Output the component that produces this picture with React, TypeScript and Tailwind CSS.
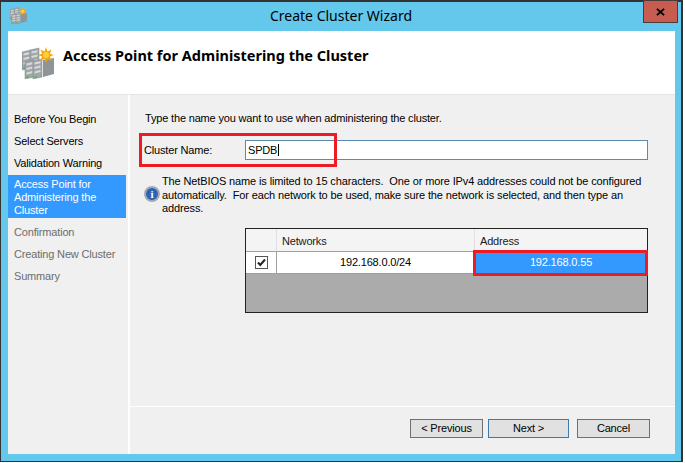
const font = "font-['Liberation_Sans',Arial,sans-serif]";

// server rack pile with the yellow burst, used in title bar and header
function ClusterIcon({ className }: { className: string }) {
  const rack = (x: number, y: number, h: number, key: number) => (
    <g key={key}>
      <path d={`M${x} ${y + 1}l9-2v${h}l-9 2z`} fill="#a2a6a9" stroke="#7f8386" strokeWidth="0.5" />
      <path d={`M${x + 1.5} ${y + 2.6}l6-1.4v2l-6 1.4zM${x + 1.5} ${y + 7}l6-1.4v2l-6 1.4zM${x + 1.5} ${y + 11.4}l6-1.4v2l-6 1.4z`} fill="#d8dbdc" />
      <rect x={x + 1.5} y={y + h - 2} width="2" height="2" fill="#45c43c" />
    </g>
  );
  return (
    <svg viewBox="0 0 32 32" className={className}>
      {rack(0, 4, 18, 1)}
      {rack(8, 2, 19, 2)}
      <path d="M21 13l11-2v16l-11 3z" fill="#8f9497" />
      {rack(3, 14, 17, 3)}
      {rack(11, 13, 18, 4)}
      <path d="M24 0l1.5 4.5 4-2-1.6 4.2 4.1 1.3-4.1 1.5 1.6 4.5-4-2.2-1.5 4.2-1.5-4.2-4.2 2.2 1.8-4.5-4.6-1.5 4.6-1.3-1.8-4.2 4.2 2z" fill="#f8a614" />
      <circle cx="24" cy="8" r="3" fill="#ffd23c" />
    </svg>
  );
}

const steps = [
  { label: "Before You Begin", state: "done" },
  { label: "Select Servers", state: "done" },
  { label: "Validation Warning", state: "done" },
  { label: "Access Point for Administering the Cluster", state: "active" },
  { label: "Confirmation", state: "todo" },
  { label: "Creating New Cluster", state: "todo" },
  { label: "Summary", state: "todo" },
];

function Sidebar() {
  return (
    <div className="w-[120px] shrink-0 bg-[#f0f0f0] pt-[13px]">
      {steps.map((s) =>
        s.state === "active" ? (
          <div key={s.label} className="w-[118px] h-[43px] bg-[#3399ff] text-white pl-[6px] pr-2 leading-[13px] pt-[3px] mt-px mb-[3px]">
            {s.label}
          </div>
        ) : (
          <div key={s.label} className={`h-[22px] pl-[6px] leading-[22px] whitespace-nowrap ${s.state === "todo" ? "text-[#6d6d6d]" : "text-black"}`}>
            {s.label}
          </div>
        ),
      )}
    </div>
  );
}

function WizButton({ label, width, primary }: { label: string; width: string; primary?: boolean }) {
  return (
    <button
      type="button"
      className={`h-[19px] ${width} bg-[#e1e1e1] border leading-[17px] text-black ${primary ? "border-[#3f7ba8]" : "border-[#707070]"}`}
    >
      {label}
    </button>
  );
}

export default function App() {
  return (
    <div className={`w-[685px] h-[463px] bg-white overflow-hidden text-[11px] tracking-[-0.17px] ${font}`}>
      <div className="w-[683px] h-[462px] bg-[#63c8ec] border border-[#333] border-r-2 border-t-2 flex flex-col relative">
        {/* title bar */}
        <div className="h-[29px] shrink-0 flex items-center justify-center relative">
          <ClusterIcon className="absolute left-[9px] top-[5px] w-[17px] h-[17px]" />
          <span className="text-[14px] tracking-normal text-black pb-[2px] font-['Noto_Sans',sans-serif]">Create Cluster Wizard</span>
          <div className="absolute right-[3px] top-[-2px] w-[35px] h-[23px] bg-[#c75c51] border border-[#4a3a3a] flex items-center justify-center">
            <svg viewBox="0 0 10 9" className="w-[9px] h-[8px]">
              <path d="M1 1l8 7M9 1L1 8" stroke="#000" strokeWidth="2.2" fill="none" />
            </svg>
          </div>
        </div>

        <div className="mx-[7px] w-[667px] h-[423px] flex flex-col bg-white">
          {/* header */}
          <div className="h-[63px] shrink-0 flex items-center pl-[14px]">
            <ClusterIcon className="w-[32px] h-[32px] mr-[9px]" />
            <h1 className="text-[14.5px] tracking-normal font-bold text-black pb-[13px] font-['Noto_Sans',sans-serif]">Access Point for Administering the Cluster</h1>
          </div>
          <div className="h-px bg-[#e4e4e4] shrink-0" />

          <div className="flex-1 flex min-h-0">
            <Sidebar />
            <div className="w-[2px] shrink-0 bg-white" />
            <div className="flex-1 flex flex-col bg-[#f0f0f0] min-w-0">
              <div className="h-[312px] shrink-0 border-b border-white pt-[16px] pl-[15px] relative">
                <p className="leading-[14px] text-black whitespace-nowrap">Type the name you want to use when administering the cluster.</p>

                <div className="flex items-center mt-[15px] -ml-px">
                  <span className="w-[101px] shrink-0 text-black">Cluster Name:</span>
                  <div className="w-[403px] h-[20px] bg-white border border-[#5a8ab0] pl-[2px] leading-[18px] text-black">
                    SPDB<span className="border-l border-black ml-px" />
                  </div>
                </div>
                <div className="absolute left-[9px] top-[38px] w-[198px] h-[34px] border-[3px] border-[#ed1c24]" />

                <div className="flex mt-[15px] -ml-px">
                  <div className="w-[18px] shrink-0 pt-[11px]">
                    <div className="w-[16px] h-[16px] rounded-full bg-[#2d63b5] border-2 border-[#a4a9b3] flex items-center justify-center text-white font-bold text-[11px] leading-none font-['Liberation_Serif',serif]">
                      i
                    </div>
                  </div>
                  <p className="leading-[13.5px] h-[41px] text-black whitespace-nowrap tracking-[-0.12px]">
                    The NetBIOS name is limited to 15 characters.&nbsp; One or more IPv4 addresses could not be configured
                    <br />
                    automatically.&nbsp; For each network to be used, make sure the network is selected, and then type an
                    <br />
                    address.
                  </p>
                </div>

                {/* networks grid */}
                <div className="mt-[12px] ml-[100px] w-[403px] h-[85px] bg-[#ababab] border border-[#222] flex flex-col">
                  <div className="h-[22px] flex bg-[#f4f4f4] text-[#1a1a1a] leading-[24px]">
                    <div className="w-[31px] border-r border-[#e0e0e0]" />
                    <div className="w-[198px] border-r border-[#e0e0e0] pl-[5px]">Networks</div>
                    <div className="flex-1 pl-[5px]">Address</div>
                  </div>
                  <div className="h-[23px] flex bg-white border-t border-[#a0a0a0] border-b border-b-[#a0a0a0] leading-[21px]">
                    <div className="w-[31px] border-r border-[#a0a0a0] flex items-center justify-center">
                      <div className="w-[13px] h-[13px] border border-[#555] bg-white flex items-center justify-center">
                        <svg viewBox="0 0 11 11" className="w-[11px] h-[11px]">
                          <path d="M2 5.5l2.3 2.5L9 2.5" stroke="#222" strokeWidth="2" fill="none" />
                        </svg>
                      </div>
                    </div>
                    <div className="w-[198px] text-center text-black border-r border-[#a0a0a0]">192.168.0.0/24</div>
                    <div className="flex-1 text-center text-white bg-[#3399ff]">192.168.0.55</div>
                  </div>
                </div>
                <div className="absolute left-[343px] top-[155px] w-[175px] h-[26px] border-[3px] border-[#ed1c24]" />
              </div>

              <div className="flex-1 flex justify-end items-start pt-[12px] pr-[25px]">
                <WizButton label="< Previous" width="w-[73px]" />
                <div className="w-[5px]" />
                <WizButton label="Next >" width="w-[81px]" primary />
                <div className="w-[8px]" />
                <WizButton label="Cancel" width="w-[73px]" />
              </div>
            </div>
          </div>
        </div>
      </div>
    </div>
  );
}
